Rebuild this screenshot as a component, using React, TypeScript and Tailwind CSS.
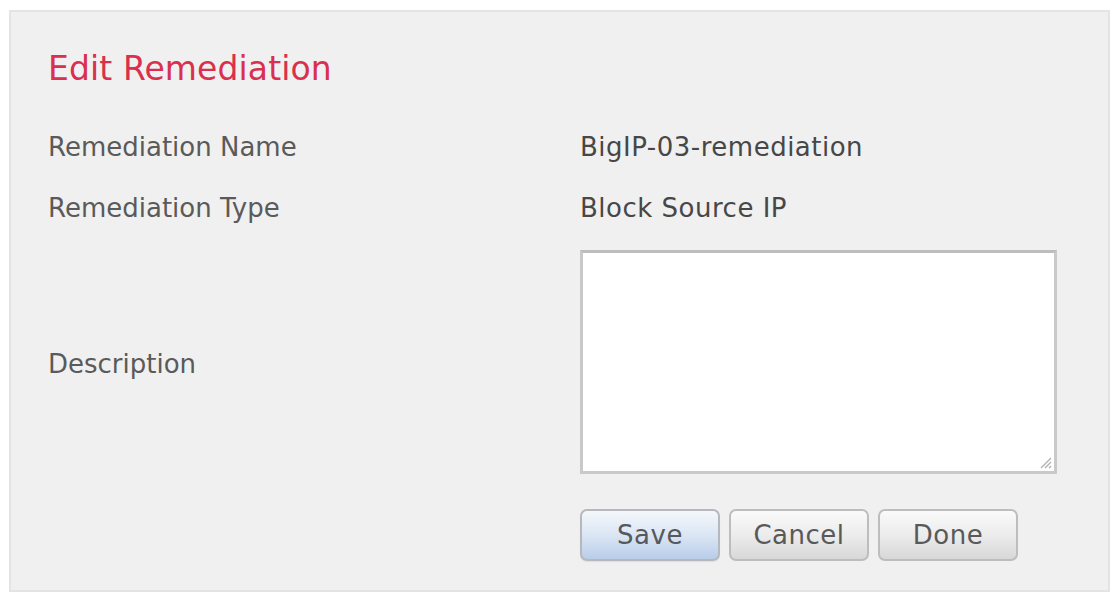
export default function App() {
  return (
    <div className="w-[1119px] h-[602px] bg-white pt-[10px] pl-[9px] font-['DejaVu_Sans',sans-serif]">
      <div className="w-[1101px] h-[582px] bg-[#f0f0f0] border-2 border-[#e4e4e4] pl-[37px] pt-[37px]">
        <h1 className="text-[33px] leading-[40px] text-[#d9304e] tracking-[0.1px]">Edit Remediation</h1>

        <div className="mt-[40px] grid grid-cols-[532px_1fr] text-[26px] leading-[30px]">
          <div className="text-[#5a5a5a] h-[61px] pt-[3px]">Remediation Name</div>
          <div className="text-[#474747] tracking-[0.5px] h-[61px] pt-[3px]">BigIP-03-remediation</div>

          <div className="text-[#5a5a5a] h-[60px] pt-[3px]">Remediation Type</div>
          <div className="text-[#474747] tracking-[0.5px] h-[60px] pt-[3px]">Block Source IP</div>

          <div className="text-[#5a5a5a] flex items-center pt-[4px]">Description</div>
          <div className="relative w-[477px] h-[224px] bg-white border-[3px] border-[#c9c9c9] border-t-[#bdbdbd]">
            <svg className="absolute right-[2px] bottom-[2px]" width="14" height="14" viewBox="0 0 14 14">
              <path d="M13 3 L3 13 M13 7 L7 13 M13 11 L11 13" stroke="#b0b0b0" strokeWidth="1.3" />
            </svg>
          </div>

          <div />
          <div className="mt-[35px] flex gap-[9px] text-[26px] tracking-[0.5px]">
            <button className="w-[140px] h-[52px] rounded-[7px] border-2 border-[#b5b8bd] bg-gradient-to-b from-[#f4f7fb] via-[#dbe6f4] to-[#b9cde9] text-[#56595e] shadow-[0_1px_1px_rgba(0,0,0,0.08)]">
              Save
            </button>
            <button className="w-[140px] h-[52px] rounded-[7px] border-2 border-[#bdbdbd] bg-gradient-to-b from-[#fafafa] via-[#ececec] to-[#d8d8d8] text-[#595959]">
              Cancel
            </button>
            <button className="w-[140px] h-[52px] rounded-[7px] border-2 border-[#bdbdbd] bg-gradient-to-b from-[#fafafa] via-[#ececec] to-[#d8d8d8] text-[#595959]">
              Done
            </button>
          </div>
        </div>
      </div>
    </div>
  )
}
